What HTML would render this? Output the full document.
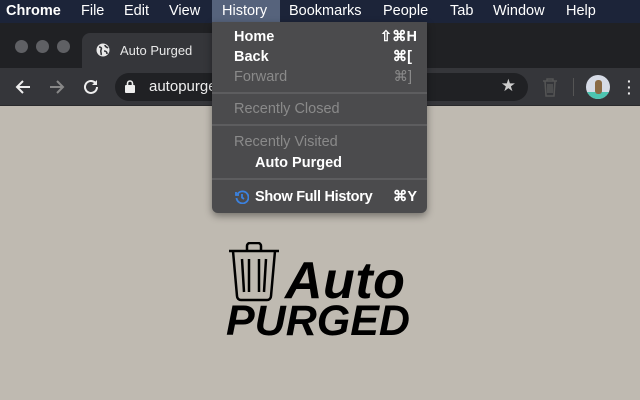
<!DOCTYPE html>
<html><head><style>
*{margin:0;padding:0;box-sizing:border-box}
body{width:640px;height:400px;overflow:hidden;background:#bfbab1;font-family:"Liberation Sans",sans-serif;position:relative}
.mb{position:absolute;left:0;top:0;width:640px;height:23px;background:#1c2439;color:#fff;font-size:14.5px}
.mb span{position:absolute;top:3px}
.tabs{position:absolute;top:23px;left:0;width:640px;height:45px;background:#202124}
.tab{position:absolute;left:82px;top:10px;width:150px;height:35px;background:#35363a;border-radius:8px 8px 0 0;color:#e8e8e8;font-size:13px}
.dot{position:absolute;top:40px;width:13px;height:13px;border-radius:50%;background:#5f6064}
.tb{position:absolute;top:68px;left:0;width:640px;height:38px;background:#35363a;border-bottom:1px solid #2a2a2c}
.omni{position:absolute;left:115px;top:5px;width:413px;height:28px;border-radius:14px;background:#202124;color:#eee;font-size:15px}
.menu{position:absolute;left:212px;top:22px;width:215px;height:191px;background:#4b4b4d;border-radius:0 0 6px 6px;box-shadow:0 3px 8px rgba(0,0,0,.4);color:#fff;font-size:14.5px}
.menu div{position:absolute;left:22px}
.menu .k{left:auto;right:10px}
.g{color:#8a8a8a}
.sep{position:absolute;left:0!important;width:215px;height:2px;background:#5d5d5f}
.logo{position:absolute;font-weight:bold;font-style:italic;color:#000}
</style></head><body>
<div class="mb">
<span style="left:6px;font-weight:bold">Chrome</span><span style="left:81px">File</span><span style="left:124px">Edit</span><span style="left:169px">View</span>
<span style="left:212px;top:0;width:68px;height:23px;background:#56637c"></span>
<span style="left:222px">History</span><span style="left:289px">Bookmarks</span><span style="left:383px">People</span><span style="left:450px">Tab</span><span style="left:493px">Window</span><span style="left:566px">Help</span>
</div>
<div class="tabs">
<div class="tab"><svg style="position:absolute;left:14px;top:10px" width="14" height="14" viewBox="0 0 14 14"><circle cx="7" cy="7" r="6.5" fill="#e8e8e8"/><path d="M3 4c2 0 3 1 2 3s1 3 0 5M9 2c0 2 2 2 3 3M8 8c1 0 3 0 3 3" stroke="#35363a" stroke-width="1.6" fill="none"/></svg><span style="position:absolute;left:38px;top:10px">Auto Purged</span></div>
</div>
<div class="dot" style="left:15px"></div><div class="dot" style="left:36px"></div><div class="dot" style="left:57px"></div>
<div class="tb">
<svg style="position:absolute;left:14px;top:10px" width="18" height="18" viewBox="0 0 18 18" fill="none" stroke="#eee" stroke-width="2"><path d="M16 9H3M9 3L3 9l6 6"/></svg>
<svg style="position:absolute;left:48px;top:10px" width="18" height="18" viewBox="0 0 18 18" fill="none" stroke="#888" stroke-width="2"><path d="M2 9h13M9 3l6 6-6 6"/></svg>
<svg style="position:absolute;left:82px;top:10px" width="18" height="18" viewBox="0 0 18 18" fill="none" stroke="#eee" stroke-width="2"><path d="M15 9a6 6 0 1 1-2-4.5"/><path d="M15 2v5h-5" fill="#eee" stroke="none"/></svg>
<div class="omni"><svg style="position:absolute;left:10px;top:7px" width="10" height="13" viewBox="0 0 10 13"><rect x="0" y="5" width="10" height="8" rx="1" fill="#eee"/><path d="M2.5 5V3.5a2.5 2.5 0 0 1 5 0V5" stroke="#eee" stroke-width="1.6" fill="none"/></svg><span style="position:absolute;left:34px;top:5px">autopurged</span><span style="position:absolute;right:12px;top:3px;color:#ccc;font-size:17px">★</span></div>
<svg style="position:absolute;left:542px;top:9px" width="16" height="20" viewBox="0 0 16 20" fill="none" stroke="#555" stroke-width="1.5"><path d="M1 4h14M5 4V2h6v2M3 4l1 15h8l1-15M6 7v9M8 7v9M10 7v9"/></svg>
<div style="position:absolute;left:573px;top:10px;width:1px;height:18px;background:#555"></div>
<div style="position:absolute;left:586px;top:7px;width:24px;height:24px;border-radius:50%;background:#d6dbe6;overflow:hidden"><div style="position:absolute;bottom:0;width:24px;height:7px;background:#4cc4b0"></div><div style="position:absolute;left:9px;top:5px;width:7px;height:14px;background:#8a6a44;border-radius:3px"></div></div>
<div style="position:absolute;left:627px;top:10px;color:#eee;font-size:14px;line-height:6px;font-weight:bold">·<br>·<br>·</div>
</div>
<div class="menu">
<div style="top:7px;font-weight:bold">Home</div><div class="k" style="top:7px;font-weight:bold">⇧⌘H</div>
<div style="top:27px;font-weight:bold">Back</div><div class="k" style="top:27px;right:15px;font-weight:bold">⌘[</div>
<div class="g" style="top:47px">Forward</div><div class="k g" style="top:47px;right:15px">⌘]</div>
<div class="sep" style="top:70px"></div>
<div class="g" style="top:79px">Recently Closed</div>
<div class="sep" style="top:102px"></div>
<div class="g" style="top:112px">Recently Visited</div>
<div style="top:133px;left:43px;font-weight:bold">Auto Purged</div>
<div class="sep" style="top:156px"></div>
<svg style="position:absolute;left:23px;top:168px" width="14" height="14" viewBox="0 0 14 14" fill="none" stroke="#3b82e0" stroke-width="1.8"><path d="M2.5 4A6 6 0 1 1 1.5 8"/><path d="M7 4v3.5l2 1.5"/><path d="M1 2v3h3" /></svg>
<div style="top:167px;left:43px;font-weight:bold;letter-spacing:-0.3px">Show Full History</div><div class="k" style="top:167px;font-weight:bold">⌘Y</div>
</div>
<svg style="position:absolute;left:228px;top:242px" width="52" height="60" viewBox="0 0 52 60" fill="none" stroke="#000" stroke-width="2.5"><path d="M1 9h50M19 9V4a3 3 0 0 1 3-3h8a3 3 0 0 1 3 3v5"/><path d="M5 9l4 45a4 4 0 0 0 4 4h26a4 4 0 0 0 4-4l4-45"/><path d="M14 17l2 33M21 17v33M31 17v33M38 17l-2 33"/></svg>
<div class="logo" style="left:285px;top:251px;font-size:52px;letter-spacing:0.5px">Auto</div>
<div class="logo" style="left:226px;top:297px;font-size:43px;letter-spacing:0px">PURGED</div>
</body></html>
